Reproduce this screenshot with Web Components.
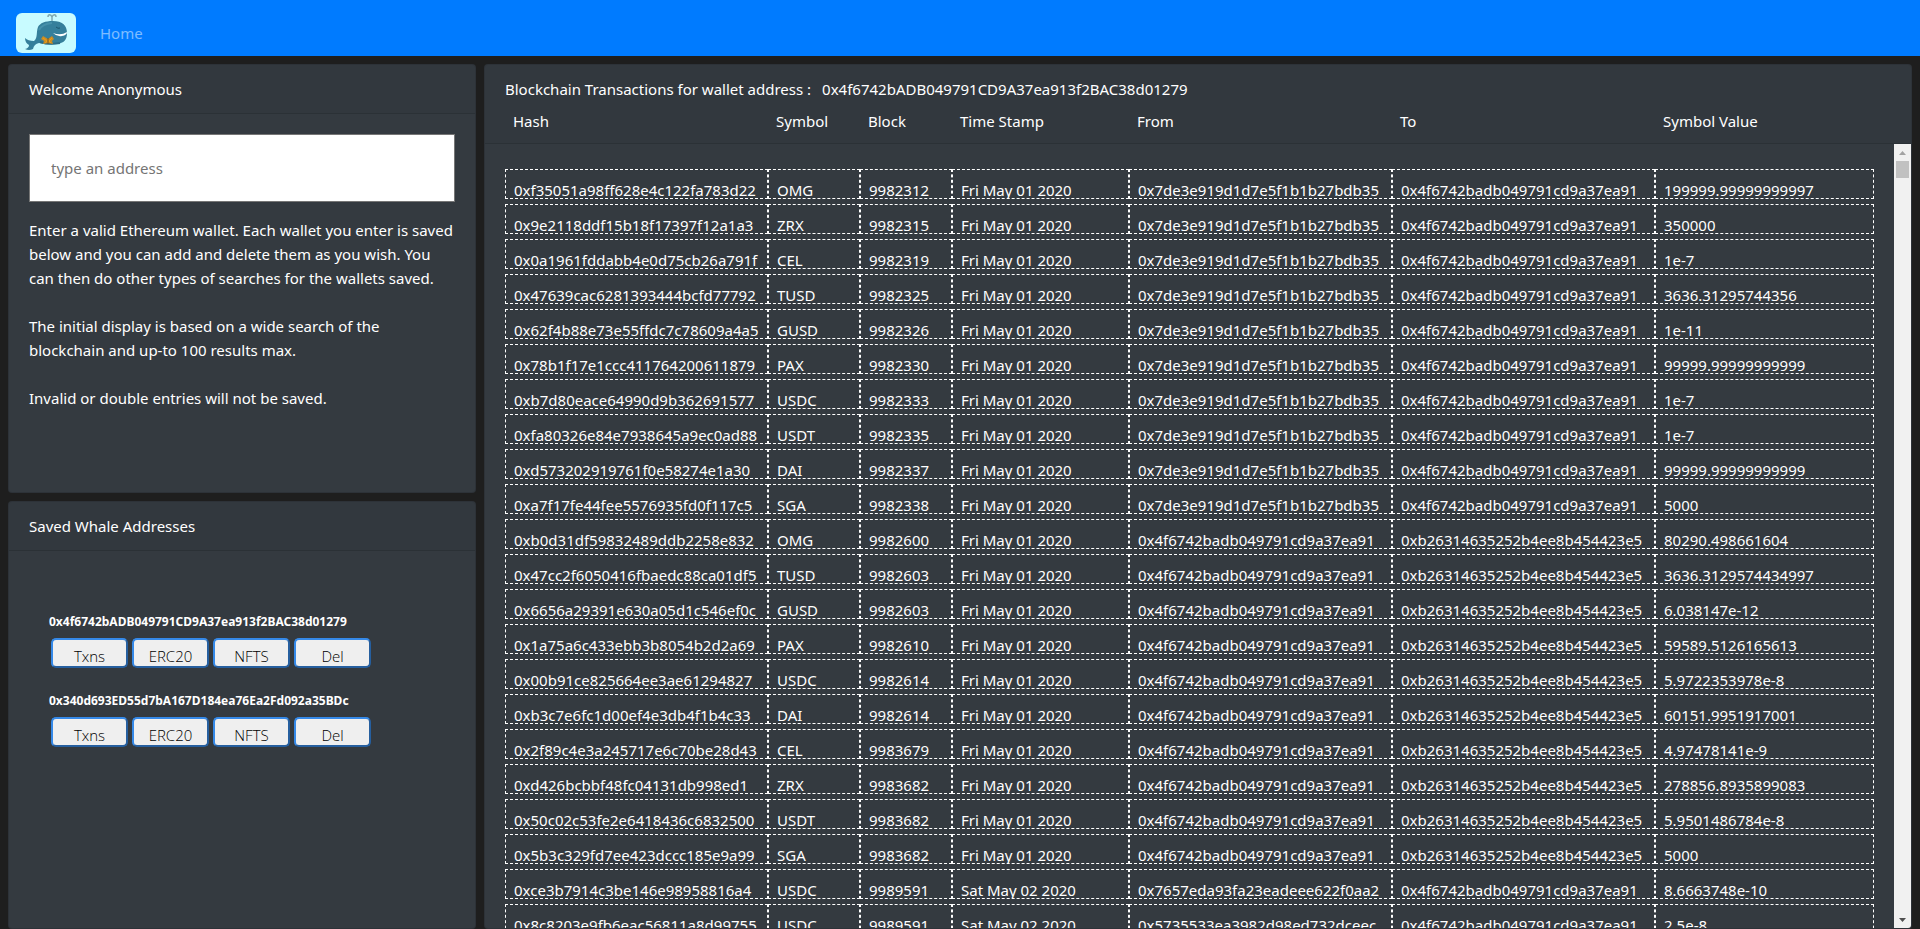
<!DOCTYPE html>
<html lang="en">
<head>
<meta charset="utf-8">
<title>Whale Watcher</title>
<style>
  html, body { height: 100%; }
  body { margin: 0; background: #1e1e1e; color: #fff; font: 15px/24px "Noto Sans", "Open Sans", sans-serif; }
</style>
</head>
<body>
<whale-app></whale-app>

<template id="t-app">
  <style>
    :host { display: flex; flex-direction: column; height: 100vh; }
    main { flex: 1; min-height: 0; display: grid; grid-template-columns: 39fr 119fr; grid-template-rows: 1fr 1fr; gap: 8px; padding: 8px 8px 0; }
    transaction-panel { grid-column: 2; grid-row: 1 / 3; }
  </style>
  <nav-bar></nav-bar>
  <main>
    <info-card>
      <span slot="title">Welcome Anonymous</span>
      <address-form></address-form>
    </info-card>
    <transaction-panel address="0x4f6742bADB049791CD9A37ea913f2BAC38d01279"></transaction-panel>
    <info-card>
      <span slot="title">Saved Whale Addresses</span>
      <saved-list>
        <saved-wallet>0x4f6742bADB049791CD9A37ea913f2BAC38d01279</saved-wallet>
        <saved-wallet>0x340d693ED55d7bA167D184ea76Ea2Fd092a35BDc</saved-wallet>
      </saved-list>
    </info-card>
  </main>
</template>

<template id="t-nav">
  <style>
    :host { display: block; background: #007bff; }
    nav { display: flex; align-items: center; gap: 24px; padding: 13px 16px 3px; }
    .brand { display: block; height: 40px; }
    svg { display: block; border-radius: 6px; }
    .link { color: rgba(255,255,255,.5); text-decoration: none; }
  </style>
  <nav>
    <a class="brand" href="#" aria-label="Whale">
      <svg width="60" height="40" viewBox="0 0 60 40">
        <rect width="60" height="40" fill="#c8fbff"/>
        <path d="M36 9V3M36 4C35 1 32 1 32 4M36 4C37 1 40 1 40 4" fill="none" stroke="#7fa9b0" stroke-width="1.5"/>
        <path d="M18 28C22 25 20 19 22 14C24 10 29 8 37 8C46 8 51 12 51 20C51 27 48 30 41 31C34 32 27 31 23 30Q18 31 17 36Q13 38 9 36Q13 35 13 32Q9 30 9 25Q12 28 18 28Z" fill="#357f9b"/>
        <path d="M23 17Q26 11 36 10" fill="none" stroke="#4690aa" stroke-width="2"/>
        <path d="M24 29Q33 32 44 30" fill="none" stroke="#2a6c87" stroke-width="2"/>
        <path d="M37 20Q45 23 51 19Q51 22 46 23Q41 24 37 20Z" fill="#fff"/>
        <path d="M40 14Q42 16 44 15" fill="none" stroke="#1c566e" stroke-width="1"/>
        <path d="M32 26L27 23L25 26L28 28L27 31L32 30L37 31L36 28L38 26L36 23Z" fill="#c98c24"/>
        <path d="M27 25L31 28L29 30M36 25L33 28L35 30" fill="none" stroke="#ec9d16"/>
        <path d="M32 25V31" stroke="#7a5a22"/>
      </svg>
    </a>
    <a class="link" href="#">Home</a>
  </nav>
</template>

<template id="t-card">
  <style>
    :host { display: flex; flex-direction: column; min-height: 0; box-sizing: border-box; border: 1px solid rgba(0,0,0,.125); border-radius: 4px; background: #343a40; overflow: hidden; }
    header { padding: 12px 20px; background: rgba(0,0,0,.03); border-bottom: 1px solid rgba(0,0,0,.125); }
    .body { padding: 20px; }
  </style>
  <header><slot name="title"></slot></header>
  <div class="body"><slot></slot></div>
</template>

<template id="t-form">
  <style>
    :host { display: block; }
    input { display: block; box-sizing: border-box; width: 100%; height: 68px; margin: 0 0 16px; padding: 0 21px; border: 1px solid #767676; background: #fff; color: #212529; font: inherit; border-radius: 0; }
    input::placeholder { color: #757575; opacity: 1; }
    p { margin: 0 0 24px; }
  </style>
  <input type="text" placeholder="type an address" aria-label="Wallet address">
  <p>Enter a valid Ethereum wallet. Each wallet you enter is saved below and you can add and delete them as you wish. You can then do other types of searches for the wallets saved.</p>
  <p>The initial display is based on a wide search of the blockchain and up-to 100 results max.</p>
  <p>Invalid or double entries will not be saved.</p>
</template>

<template id="t-list">
  <style>
    :host { display: flex; flex-direction: column; gap: 23px; padding: 41px 20px; }
  </style>
  <slot></slot>
</template>

<template id="t-wallet">
  <style>
    :host { display: block; }
    .addr { font-size: 12px; line-height: 20px; font-weight: 700; }
    .row { display: flex; gap: 4px; padding: 6px 2px 0; }
    button { box-sizing: border-box; width: 77px; height: 30px; padding: 6px 0 0; border: 2px solid; border-color: #3589e8 #265f9f #265f9f #3589e8; border-radius: 5px; background: #efefef; color: #000; font: 300 15px/20px "Open Sans", sans-serif; overflow: hidden; }
  </style>
  <div class="addr"><slot></slot></div>
  <div class="row">
    <button type="button">Txns</button>
    <button type="button">ERC20</button>
    <button type="button">NFTS</button>
    <button type="button">Del</button>
  </div>
</template>

<template id="t-rail">
  <style>
    :host { display: flex; flex-direction: column; width: 17px; background: #f1f1f1; }
    button { flex: none; display: flex; align-items: center; justify-content: center; height: 17px; padding: 0; border: 0; background: none; }
    .track { flex: 1; padding: 0 2px; }
    .thumb { height: 17px; background: #c1c1c1; }
  </style>
  <button type="button" aria-label="Scroll up"><svg width="7" height="4"><path d="M0 4L3.5 0L7 4Z" fill="#a3a3a3"/></svg></button>
  <div class="track"><div class="thumb"></div></div>
  <button type="button" aria-label="Scroll down"><svg width="7" height="4"><path d="M0 0L3.5 4L7 0Z" fill="#505050"/></svg></button>
</template>

<template id="t-panel">
  <style>
    :host { display: flex; flex-direction: column; min-height: 0; box-sizing: border-box; border: 1px solid rgba(0,0,0,.125); border-radius: 4px; background: #343a40; overflow: hidden; }
    .title { display: flex; gap: 11px; padding: 12px 20px 8px; background: rgba(0,0,0,.03); }
    .area { flex: 1; min-height: 0; display: grid; grid-template-columns: 1fr 17px; grid-template-rows: auto 1fr; }
    table { display: contents; }
    thead { display: block; grid-column: 1 / 3; padding: 0 37px 10px 20px; background: rgba(0,0,0,.03); border-bottom: 1px solid rgba(0,0,0,.125); }
    tbody { display: block; grid-column: 1; grid-row: 2; min-height: 0; overflow: auto; scrollbar-width: none; padding: 25px 20px 0; }
    scroll-rail { grid-column: 2; grid-row: 2; }
    tr { display: grid; grid-template-columns: 263fr 92fr 92fr 177fr 263fr 263fr 219fr; }
    tbody tr { margin-bottom: 5px; }
    th, td { box-sizing: border-box; min-width: 0; padding: 0 8px; text-align: left; font-weight: 400; white-space: nowrap; overflow: hidden; }
    td { height: 30px; padding-top: 8px; border: 1px dashed #fff; }
  </style>
  <div class="title"><span>Blockchain Transactions for wallet address :</span><span class="wallet"></span></div>
  <div class="area">
    <table>
      <thead><tr><th scope="col">Hash</th><th scope="col">Symbol</th><th scope="col">Block</th><th scope="col">Time Stamp</th><th scope="col">From</th><th scope="col">To</th><th scope="col">Symbol Value</th></tr></thead>
      <tbody></tbody>
    </table>
    <scroll-rail></scroll-rail>
  </div>
</template>

<script>
  const define = (name, id, setup) => customElements.define(name, class extends HTMLElement {
    constructor() {
      super();
      this.attachShadow({ mode: 'open' }).append(document.getElementById(id).content.cloneNode(true));
    }
    connectedCallback() { if (setup) setup(this, this.shadowRoot); }
  });

  const FRI = 'Fri May 01 2020', SAT = 'Sat May 02 2020';
  const A = '0x7de3e919d1d7e5f1b1b27bdb35', B = '0x4f6742badb049791cd9a37ea91', C = '0xb26314635252b4ee8b454423e5';
  const transactions = [
    ['0xf35051a98ff628e4c122fa783d22', 'OMG', '9982312', FRI, A, B, '199999.99999999997'],
    ['0x9e2118ddf15b18f17397f12a1a3', 'ZRX', '9982315', FRI, A, B, '350000'],
    ['0x0a1961fddabb4e0d75cb26a791f', 'CEL', '9982319', FRI, A, B, '1e-7'],
    ['0x47639cac6281393444bcfd77792', 'TUSD', '9982325', FRI, A, B, '3636.31295744356'],
    ['0x62f4b88e73e55ffdc7c78609a4a5', 'GUSD', '9982326', FRI, A, B, '1e-11'],
    ['0x78b1f17e1ccc411764200611879', 'PAX', '9982330', FRI, A, B, '99999.99999999999'],
    ['0xb7d80eace64990d9b362691577', 'USDC', '9982333', FRI, A, B, '1e-7'],
    ['0xfa80326e84e7938645a9ec0ad88', 'USDT', '9982335', FRI, A, B, '1e-7'],
    ['0xd573202919761f0e58274e1a30', 'DAI', '9982337', FRI, A, B, '99999.99999999999'],
    ['0xa7f17fe44fee5576935fd0f117c5', 'SGA', '9982338', FRI, A, B, '5000'],
    ['0xb0d31df59832489ddb2258e832', 'OMG', '9982600', FRI, B, C, '80290.498661604'],
    ['0x47cc2f6050416fbaedc88ca01df5', 'TUSD', '9982603', FRI, B, C, '3636.3129574434997'],
    ['0x6656a29391e630a05d1c546ef0c', 'GUSD', '9982603', FRI, B, C, '6.038147e-12'],
    ['0x1a75a6c433ebb3b8054b2d2a69', 'PAX', '9982610', FRI, B, C, '59589.5126165613'],
    ['0x00b91ce825664ee3ae61294827', 'USDC', '9982614', FRI, B, C, '5.9722353978e-8'],
    ['0xb3c7e6fc1d00ef4e3db4f1b4c33', 'DAI', '9982614', FRI, B, C, '60151.9951917001'],
    ['0x2f89c4e3a245717e6c70be28d43', 'CEL', '9983679', FRI, B, C, '4.97478141e-9'],
    ['0xd426bcbbf48fc04131db998ed1', 'ZRX', '9983682', FRI, B, C, '278856.8935899083'],
    ['0x50c02c53fe2e6418436c6832500', 'USDT', '9983682', FRI, B, C, '5.9501486784e-8'],
    ['0x5b3c329fd7ee423dccc185e9a99', 'SGA', '9983682', FRI, B, C, '5000'],
    ['0xce3b7914c3be146e98958816a4', 'USDC', '9989591', SAT, '0x7657eda93fa23eadeee622f0aa2', B, '8.6663748e-10'],
    ['0x8c8203e9fb6eac56811a8d99755', 'USDC', '9989591', SAT, '0x5735533ea3982d98ed732dceec', B, '2.5e-8']
  ];

  define('nav-bar', 't-nav');
  define('info-card', 't-card');
  define('address-form', 't-form');
  define('saved-list', 't-list');
  define('saved-wallet', 't-wallet');
  define('scroll-rail', 't-rail', (host, root) => {
    const [up, down] = root.querySelectorAll('button');
    const move = by => host.dispatchEvent(new CustomEvent('rail', { detail: by }));
    up.onclick = () => move(-35);
    down.onclick = () => move(35);
  });
  define('transaction-panel', 't-panel', (host, root) => {
    root.querySelector('.wallet').textContent = host.getAttribute('address');
    const body = root.querySelector('tbody');
    for (const row of transactions) {
      const tr = body.insertRow();
      for (const value of row) tr.insertCell().textContent = value;
    }
    root.querySelector('scroll-rail').addEventListener('rail', e => body.scrollBy(0, e.detail));
  });
  define('whale-app', 't-app');
</script>
</body>
</html>
